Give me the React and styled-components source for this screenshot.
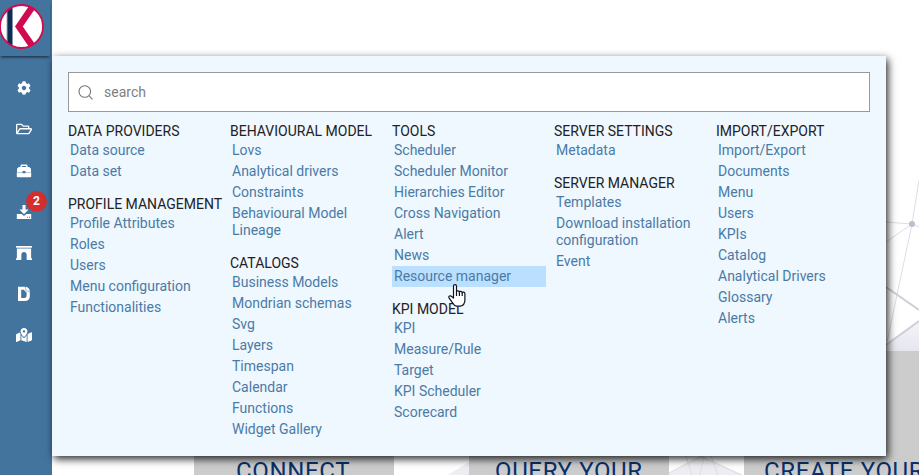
import React from "react";
import styled, { createGlobalStyle } from "styled-components";
import { FaCog, FaRegFolderOpen, FaArchway, FaMapMarkedAlt } from "react-icons/fa";

const GlobalStyle = createGlobalStyle`
  *, *::before, *::after { box-sizing: border-box; }
  body { margin: 0; overflow: hidden; background: #fff; font-family: Roboto, "Liberation Sans", sans-serif; }
`;

const Shell = styled.div`
  position: relative;
  display: flex;
  width: 919px;
  height: 475px;
  overflow: hidden;
  background: #fff;
`;

const Sidebar = styled.nav`
  flex: 0 0 52px;
  display: flex;
  flex-direction: column;
  background: #43749e;
`;

const Brand = styled.div`
  height: 56px;
  width: 50px;
  flex: none;
  padding-top: 3px;
  box-shadow: 0 2px 3px -1px rgba(0, 0, 0, 0.7);
  svg { display: block; }
`;

const NavItem = styled.button`
  position: relative;
  height: 41.2px;
  flex: none;
  width: 47px;
  padding: 0;
  border: 0;
  background: none;
  color: #fff;
  display: grid;
  place-items: center;
  svg { display: block; }
`;

const NavList = styled.div`
  display: flex;
  flex-direction: column;
  padding-top: 11.6px;
`;

const Badge = styled.span`
  position: absolute;
  left: 26px;
  top: 0;
  width: 21px;
  height: 21px;
  border-radius: 50%;
  background: #d32f2f;
  font: 700 12px/21px Roboto, sans-serif;
  text-align: center;
`;

const Home = styled.main`
  position: relative;
  flex: 1;
  display: flex;
  flex-direction: column;
  justify-content: flex-end;
`;

const Network = styled.svg`
  position: absolute;
  inset: 0;
`;

const Cards = styled.div`
  position: relative;
  display: flex;
  gap: 75px;
  width: 950px;
  height: 124px;
  padding-left: 142px;
`;

const Card = styled.section`
  flex: 0 0 200px;
  height: 124px;
  padding: 105px 0 0 ${(p) => p.$indent}px;
  background: #ccc;
  overflow: hidden;
  color: #08306b;
  font-size: 24px;
  letter-spacing: 0.65px;
  line-height: 30px;
  white-space: nowrap;
`;

const Menu = styled.div`
  position: absolute;
  left: 52px;
  top: 56px;
  width: 834px;
  height: 400px;
  padding: 16px;
  background: #eff7ff;
  box-shadow: 2px 3px 8px rgba(0, 0, 0, 0.85);
`;

const Search = styled.label`
  display: flex;
  align-items: center;
  gap: 11px;
  height: 40px;
  padding-left: 9px;
  border: 1px solid #999;
  background: #fff;
  input {
    flex: 1;
    border: 0;
    outline: 0;
    padding: 0;
    background: none;
    font: 400 14px/18px Roboto, sans-serif;
    color: #666;
  }
  input::placeholder { color: #808080; opacity: 1; }
`;

const Columns = styled.div`
  display: grid;
  grid-template-columns: repeat(5, 154px);
  column-gap: 8px;
  padding-top: 11px;
`;

const Group = styled.section`
  & + & { margin-top: 14px; }
`;

const Heading = styled.h2`
  margin: 0;
  font-size: 14px;
  font-weight: 400;
  line-height: 17px;
  white-space: nowrap;
  color: #222;
`;

const Entry = styled.a`
  display: block;
  padding: 2px;
  font-size: 14px;
  line-height: 17px;
  color: #4a7ba5;
  background: ${(p) => (p.$active ? "#bbdfff" : "transparent")};
`;

const Pointer = styled.svg`
  position: absolute;
  left: 448px;
  top: 284px;
`;

const Logo = () => (
  <svg width="46" height="48" viewBox="0 0 46 48">
    <defs><clipPath id="disc"><circle cx="21.5" cy="23.5" r="21.5" /></clipPath></defs>
    <circle cx="21.5" cy="23.5" r="21.5" fill="#fff" />
    <g clipPath="url(#disc)">
      <path d="M6.5 0h1.500v48H6.500z" fill="#9aa9ba" />
      <path d="M7.500 0h5v48h-5z" fill="#0b2c55" />
      <path d="M31 0h8L22.800 23.500 39 47h-8L15 23.500z" fill="#d10a50" />
    </g>
    <circle cx="21.5" cy="23.5" r="21.5" fill="none" stroke="#d10a50" strokeWidth="1.8" />
  </svg>
);

const ToolboxIcon = () => (
  <svg width="16" height="16" viewBox="0 0 16 16" fill="#fff">
    <path fillRule="evenodd" d="M4.500 4V2.800c0-.8.6-1.300 1.300-1.300h4.400c.7 0 1.300.5 1.300 1.300V4h1.700l1.800 1.800V9.200H9.400V8H6.600v1.200H1V5.800L2.800 4zM6 4h4V3H6z" />
    <path d="M.8 9.500h5.800v.8h2.800v-.8h5.800v3.700c0 .7-.4 1.100-1.100 1.100H1.900c-.7 0-1.100-.4-1.100-1.100z" />
  </svg>
);

const DownloadIcon = () => (
  <svg width="16" height="16" viewBox="0 0 16 16" fill="#fff">
    <path d="M6.500 1h3v4.500h3L8 10.200 3.500 5.500h3z" />
    <path fillRule="evenodd" d="M.8 10h4.800L8 12l2.400-2h4.800v5H.8zM11 12.800v1h1v-1zm2 0v1h1v-1z" />
  </svg>
);

const DossierIcon = () => (
  <svg width="16" height="16" viewBox="0 0 16 16">
    <path fill="#fff" fillRule="evenodd" d="M2 .8h6.800L13.800 5.500v4.700c0 3-1.800 4.900-5 4.900H2zM5.200 3.800v8.300h2.900c1.700 0 2.500-.8 2.500-2.500V6.800L7.800 3.800z" />
    <path fill="#fff" d="M9.800.8c2.200.3 3.800 1.900 4 4.400l-3.200-.6z" />
    <path fill="none" stroke="#7ea0bf" strokeWidth=".7" d="m9.300 1.300.9 3.600 3.500.6" />
  </svg>
);

const menu = [
  [
    ["DATA PROVIDERS", ["Data source", "Data set"]],
    ["PROFILE MANAGEMENT", ["Profile Attributes", "Roles", "Users", "Menu configuration", "Functionalities"]],
  ],
  [
    ["BEHAVIOURAL MODEL", ["Lovs", "Analytical drivers", "Constraints", "Behavioural Model Lineage"]],
    ["CATALOGS", ["Business Models", "Mondrian schemas", "Svg", "Layers", "Timespan", "Calendar", "Functions", "Widget Gallery"]],
  ],
  [
    ["TOOLS", ["Scheduler", "Scheduler Monitor", "Hierarchies Editor", "Cross Navigation", "Alert", "News", "Resource manager"]],
    ["KPI MODEL", ["KPI", "Measure/Rule", "Target", "KPI Scheduler", "Scorecard"]],
  ],
  [
    ["SERVER SETTINGS", ["Metadata"]],
    ["SERVER MANAGER", ["Templates", "Download installation configuration", "Event"]],
  ],
  [
    ["IMPORT/EXPORT", ["Import/Export", "Documents", "Menu", "Users", "KPIs", "Catalog", "Analytical Drivers", "Glossary", "Alerts"]],
  ],
];

export default function App() {
  return (
    <Shell>
      <GlobalStyle />
      <Sidebar>
        <Brand><Logo /></Brand>
        <NavList>
          <NavItem><FaCog size={14} /></NavItem>
          <NavItem><FaRegFolderOpen size={16} /></NavItem>
          <NavItem><ToolboxIcon /></NavItem>
          <NavItem><DownloadIcon /><Badge>2</Badge></NavItem>
          <NavItem><FaArchway size={16} /></NavItem>
          <NavItem><DossierIcon /></NavItem>
          <NavItem><FaMapMarkedAlt size={16} /></NavItem>
        </NavList>
      </Sidebar>
      <Home>
        <Network width="867" height="475" viewBox="52 0 867 475" fill="none">
          <defs>
            <linearGradient id="haze" x1="0" y1="0" x2="0" y2="1">
              <stop offset="0" stopColor="#f4f4f8" /><stop offset="1" stopColor="#e6e6ef" />
            </linearGradient>
          </defs>
          <path d="M886 345 919 321V351H886z" fill="url(#haze)" />
          <path d="M448 475 469 462V475zM669 475V473L701 456 744 475z" fill="#ededf2" />
          <path d="M886 222 912 224 919 227M886 242 912 224 887 342M912 224 919 180M686 456l6 19M669 473l32-17 40 19M704 456l-4 19M711 456l7 19" stroke="#dddde5" />
          <path d="M886 287 919 310M886 345 919 321" stroke="#cdced9" strokeWidth="2" />
          <circle cx="912" cy="224" r="3" fill="#b8bfce" />
        </Network>
        <Cards>
          <Card $indent={42}>CONNECT</Card>
          <Card $indent={26}>QUERY YOUR</Card>
          <Card $indent={20}>CREATE YOUR</Card>
        </Cards>
      </Home>
      <Menu>
        <Search>
          <svg width="15" height="15" viewBox="0 0 15 15" fill="none" stroke="#777" strokeWidth="1.1">
            <circle cx="6.8" cy="6.5" r="5.8" /><path d="m11 10.700 3.500 3.600" />
          </svg>
          <input placeholder="search" />
        </Search>
        <Columns>
          {menu.map((groups) => (
            <div key={groups[0][0]}>
              {groups.map(([title, items]) => (
                <Group key={title}>
                  <Heading>{title}</Heading>
                  {items.map((item) => (
                    <Entry key={item} $active={item === "Resource manager"}>{item}</Entry>
                  ))}
                </Group>
              ))}
            </div>
          ))}
        </Columns>
      </Menu>
      <Pointer width="18" height="24" viewBox="0 0 18 24" fill="#fff" stroke="#111122" strokeWidth="1.2" strokeLinejoin="round">
        <path d="M5.500 14V2.200C5.500.2 8.500.2 8.500 2.200V8c0-1.700 2.900-1.500 2.900.3.300-1.500 2.800-1.200 2.800.6.400-1.300 2.700-.9 2.700.8v6c0 3.400-1.900 6-4.600 6.500H8.500c-1.600 0-2.500-1-3.200-2.400L1 13.800c-.8-1.500 1.200-2.700 2.400-1.500z" />
        <path d="M8.500 8v4M11.400 8.500V12M14.200 9v3" fill="none" />
      </Pointer>
    </Shell>
  );
}
